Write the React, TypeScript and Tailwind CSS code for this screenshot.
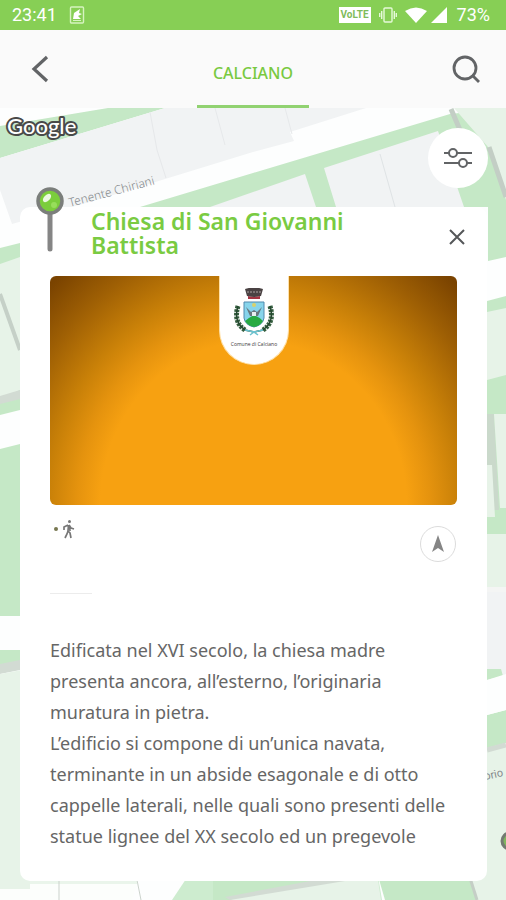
import React from "react";

function MapCanvas() {
  return (
    <svg
      className="absolute inset-0 h-full w-full"
      viewBox="0 108 506 792"
      preserveAspectRatio="xMidYMin slice"
      role="img"
      aria-label="Mappa"
    >
      <rect y="108" width="506" height="792" fill="#fdfefe" />
      {/* upper blocks */}
      <path d="M0 126 L108 108 H165 L0 158Z" fill="#c5e8c6" />
      <path d="M0 158 L165 108 H366 L290 132 L294 141 L253 152 L100 199 L12 224 L0 190Z" fill="#f1f3f4" />
      <path d="M150 112 L157 150 L166 178 M215 108 L225 145 M285 108 L292 134" stroke="#e6e8ea" fill="none" />
      <path d="M140 207 L253 173 L450 114 L506 108 V257 L488 261 V207Z" fill="#c5e8c6" />
      <path d="M210 207 L305 174 L316 207Z M324 168 L438 131 L464 207 H336Z" fill="#f1f3f4" />
      <path d="M380 154 L395 207" stroke="#dfe3e5" />
      <path d="M454 108 H506 V200 L488 147Z" fill="#e7f3e8" />
      <path d="M451 109 L466 144 M489 147 L506 197" stroke="#c3cec5" strokeWidth="5" />
      {/* left side */}
      <path d="M0 248 L20 243 V410 L0 415Z" fill="#c5e8c6" />
      <path d="M0 264 L20 257 V390 L0 400Z" fill="#e7f3e8" />
      <path d="M0 294 L20 350" stroke="#c5d0c7" strokeWidth="4" />
      <path d="M0 396 L20 390 V399 L0 404Z" fill="#d2dbd3" />
      <path d="M0 449 L20 444 V616 H0Z M0 650 H20 V664 H0Z" fill="#c5e8c6" />
      <path d="M0 664 L20 660 V670 L0 674Z" fill="#d2dbd3" />
      <path d="M0 674 L22 670 V890 H0Z" fill="#e7f3e8" />
      {/* right side */}
      <path d="M487 301 L506 296 V535 H487Z" fill="#c5e8c6" />
      <path d="M487 312 L506 308 V375 L487 380Z" fill="#e7f3e8" />
      <path d="M487 414 H494 L499 510 H487Z" fill="#cad9cb" />
      <path d="M494 414 H506 V508 H500Z M487 465 H492 L495 517 H487Z" fill="#e7f3e8" />
      <path d="M487 534 H506 V587 H487Z" fill="#e7f3e8" />
      <path d="M487 587 H506 V592 H487Z" fill="#f4f5f4" />
      <path d="M487 592 H506 V680 H487Z" fill="#f1f3f4" />
      <path d="M487 669 H501 L503 676 L487 680Z" fill="#c5e8c6" />
      <path d="M487 715 L506 710 V743 L487 748Z" fill="#c5e8c6" />
      {/* street running past the lower right corner */}
      <path d="M487 680 L506 674 V710 L487 715Z" fill="#fdfefe" />
      <path d="M487 750 L506 745 V900 H472 V876Z" fill="#e7f3e8" />
      <path d="M487 750 L506 745" stroke="#d2dbd3" strokeWidth="5" />
      {/* lower blocks */}
      <path d="M0 876 H139 L132 900 H0Z" fill="#fcfefc" />
      <path d="M0 876 H30 V889 H0Z" fill="#e7f3e8" />
      <path d="M30 876 H137 V884 H30Z" fill="#eaf5eb" />
      <path d="M59 880 V900 M137 880 L141 900" stroke="#cbd2cc" />
      <path d="M188 876 H378 L382 900 H172Z" fill="#cdeccf" />
      <path d="M213 876 H345 L250 900 H213Z" fill="#c5e8c6" />
      <path d="M238 897 L345 880 H378 L381 900 H230Z" fill="#e7f3e8" />
      <path d="M230 900 L345 881 H310 L225 897Z" fill="#d2dbd3" />
      <path d="M378 876 H469 L476 900 H385Z" fill="#c5e8c6" />
      <path d="M470 878 L477 900" stroke="#c5cec6" strokeWidth="3" />
      <circle cx="510" cy="841" r="8" fill="#80b65e" stroke="#737a72" strokeWidth="3" />
      {/* labels */}
      <text x="70" y="207" transform="rotate(-15 70 207)" fontSize="12" fill="#85898c" fontFamily="Noto Sans, sans-serif" fontWeight="300">Tenente Chiriani</text>
      <text x="485" y="780" transform="rotate(-12 485 780)" fontSize="11" fill="#85898c" fontFamily="Roboto, sans-serif">orio</text>
      <text x="7" y="134" fontSize="22" fill="#fff" stroke="#494949" strokeWidth="4" strokeLinejoin="round" paintOrder="stroke" fontFamily="Lato, sans-serif" fontWeight="500">Google</text>
    </svg>
  );
}

function StatusBar() {
  return (
    <div className="flex h-[30px] shrink-0 items-center bg-[#87cf55] pr-4 pl-3 text-white">
      <span className="text-[18px] leading-5">23:41</span>
      <svg className="ml-3 h-[18px] w-4" viewBox="0 0 16 18" fill="none" aria-hidden="true">
        <rect x="1.5" y="1" width="13" height="16" rx="1" stroke="#d6f3c0" strokeWidth="1.4" />
        <path d="M4 13 L5 7 L11 3 L10 7 L13 8 L9 10 L12 13Z" fill="#fff" />
        <path d="M4 14.5h8" stroke="#d6f3c0" />
      </svg>
      <div className="ml-auto flex items-center">
        <span className="flex h-4 w-8 items-center justify-center bg-white text-[10px] leading-4 font-bold text-[#7fbb5a]">VoLTE</span>
        <svg className="ml-2 h-[18px] w-[18px]" viewBox="0 0 18 18" fill="none" stroke="#e6f9d9" strokeWidth="1.4" aria-hidden="true">
          <rect x="5" y="2" width="8" height="14" rx="1" />
          <path d="M2.700 5v8M.7 7v4M15.300 5v8M17.300 7v4" />
        </svg>
        <svg className="ml-2 h-4 w-[22px]" viewBox="0 0 22 16" fill="#fff" aria-hidden="true">
          <path d="M0 4 Q11 -3 22 4 L11 16Z" />
        </svg>
        <svg className="ml-1 h-4 w-4" viewBox="0 0 16 16" fill="#fff" aria-hidden="true">
          <path d="M16 0V16H0Z" />
        </svg>
        <span className="ml-2.5 text-[18px] leading-5">73%</span>
      </div>
    </div>
  );
}

function Header() {
  return (
    <header className="flex h-[78px] shrink-0 items-stretch justify-between bg-[#fafafa]">
      <button aria-label="Indietro" className="flex w-20 items-center justify-center">
        <svg className="h-7 w-5" viewBox="0 0 20 28" fill="none" stroke="#626466" strokeWidth="3.200" aria-hidden="true">
          <path d="M17 2 L4 14 L17 26" />
        </svg>
      </button>
      <nav className="flex">
        <a href="#calciano" className="flex w-28 items-center justify-center border-b-3 border-[#91d271] pt-2.5 font-['Noto_Sans',sans-serif] text-[16px] leading-5 font-medium text-[#78c940]">
          CALCIANO
        </a>
      </nav>
      <button aria-label="Cerca" className="flex w-20 items-center justify-center">
        <svg className="h-7 w-7" viewBox="0 0 28 28" fill="none" stroke="#626466" strokeWidth="2.800" aria-hidden="true">
          <circle cx="13" cy="13" r="11" />
          <path d="M20 20 L27 27" />
        </svg>
      </button>
    </header>
  );
}

function Crest() {
  return (
    <svg className="h-[60px] w-12" viewBox="0 0 48 60" role="img" aria-label="Comune di Calciano">
      <path d="M15 1 Q24 -2 33 1 L31 8 Q24 10 17 8Z" fill="#4a4243" />
      <path d="M17 4 H31" stroke="#8c8484" strokeWidth="1.500" strokeDasharray="2 1" />
      <path d="M18 8 Q24 10 30 8 V11 H18Z" fill="#a33442" />
      <path d="M14 14 H34 V30 Q33 37 24 39 Q15 37 14 30Z" fill="#87d4eb" stroke="#5089ae" />
      <path d="M15 33 Q20 29 24 27 Q29 29 33 33 Q30 38 24 39 Q18 38 15 33Z" fill="#27aa43" />
      <circle cx="24" cy="17" r="2" fill="#d9d16b" />
      <path d="M16 19 L21 24 L24 22 L27 24 L32 19 L28 28 H20Z" fill="#68777f" />
      <path d="M22 24 H26 V28 H22Z" fill="#e7eef0" />
      <path d="M8 18 Q3 34 15 42" fill="none" stroke="#365f40" strokeWidth="5" strokeDasharray="2.500 1" />
      <path d="M40 18 Q45 34 33 42" fill="none" stroke="#365f40" strokeWidth="5" strokeDasharray="2.500 1" />
      <path d="M8 18 Q3 34 15 42 L24 44 M40 18 Q45 34 33 42 L24 44" fill="none" stroke="#24472f" strokeWidth="1.500" />
      <path d="M15 42 L24 44 L20 47 M33 42 L24 44 L28 47" fill="none" stroke="#6bc3d0" strokeWidth="1.500" />
      <text x="24" y="58" textAnchor="middle" fontSize="5" fill="#393939" fontFamily="Open Sans, sans-serif">Comune di Calciano</text>
    </svg>
  );
}

function Banner() {
  return (
    <div className="flex h-[229px] justify-center overflow-hidden rounded-md bg-[radial-gradient(ellipse_71%_135%_at_50%_100%,#f7a111_0%,#f7a111_53%,#e5930e_61%,#c88008_71%,#9e5f04_86%,#7a4300_100%)]">
      <div className="flex h-[89px] w-[70px] justify-center rounded-b-full border border-t-0 border-[#ffe1a9] bg-white pt-3">
        <Crest />
      </div>
    </div>
  );
}

function PlaceCard() {
  return (
    <article className="relative mt-[99px] mr-[19px] mb-[19px] ml-5 rounded-[10px] bg-white px-[30px] pb-[29px]">
      <svg className="absolute -top-5 left-4 h-[66px] w-7" viewBox="0 0 28 66" aria-hidden="true">
        <path d="M14 27V62" stroke="#858585" strokeWidth="5" strokeLinecap="round" />
        <circle cx="14" cy="14" r="12" fill="#7bcd3c" stroke="#7b7e7b" strokeWidth="3.500" />
        <ellipse cx="11" cy="11" rx="5" ry="3" transform="rotate(-45 11 11)" fill="#fff" opacity=".85" />
        <circle cx="18" cy="18" r="3" fill="#b4f079" opacity=".5" />
      </svg>
      <div className="flex h-[69px] items-start justify-between pt-0.5 pl-[41px]">
        <h1 className="max-w-[280px] font-['Noto_Sans',sans-serif] text-[23px] leading-6 font-semibold text-[#7acb42]">
          Chiesa di San Giovanni Battista
        </h1>
        <button aria-label="Chiudi" className="-mr-2 mt-[18px] flex h-5 w-4 items-center justify-center">
          <svg className="h-4 w-4" viewBox="0 0 16 16" fill="none" stroke="#555759" strokeWidth="2" aria-hidden="true">
            <path d="M1 1 L15 15 M15 1 L1 15" />
          </svg>
        </button>
      </div>
      <Banner />
      <div className="flex h-[88px] items-start justify-between pt-3.5">
        <div className="flex items-center gap-1 pl-1">
          <span className="h-1 w-1 rounded-full bg-[#777750]" />
          <svg className="h-5 w-4" viewBox="0 0 16 20" fill="none" stroke="#777" strokeWidth="1.700" aria-label="A piedi" role="img">
            <circle cx="7.500" cy="2.500" r="1.500" fill="#777" stroke="none" />
            <path d="M6.500 6 L6 12 L8 14 L9 19 M6 12 L5 15 L3 19 M6 6 L2 8 L2 11 M7 6 L9 9 L12 10 M7.500 6 L8 12" />
          </svg>
        </div>
        <button aria-label="Indicazioni" className="mt-[7px] mr-px flex h-9 w-9 items-center justify-center rounded-full border border-[#dcdcdc]">
          <svg className="h-[18px] w-3" viewBox="0 0 12 18" fill="#858585" aria-hidden="true">
            <path d="M6 0 L12 17 L6 13 L0 17Z" />
          </svg>
        </button>
      </div>
      <hr className="w-[42px] border-[#ececec]" />
      <div className="pt-[41px] font-['Noto_Sans',sans-serif] text-[18px] leading-[31px] text-[#666]">
        <p>Edificata nel XVI secolo, la chiesa madre <br />presenta ancora, all’esterno, l’originaria <br />muratura in pietra.</p>
        <p>L’edificio si compone di un’unica navata, <br />terminante in un abside esagonale e di otto <br />cappelle laterali, nelle quali sono presenti delle <br />statue lignee del XX secolo ed un pregevole</p>
      </div>
    </article>
  );
}

export default function App() {
  return (
    <div className="flex min-h-screen flex-col font-[Roboto,sans-serif]">
      <StatusBar />
      <Header />
      <main className="relative flex-1 overflow-hidden">
        <MapCanvas />
        <button aria-label="Filtri" className="absolute top-5 right-[18px] z-10 flex h-[60px] w-[60px] items-center justify-center rounded-full bg-white">
          <svg className="h-6 w-7" viewBox="0 0 28 24" fill="none" stroke="#626466" strokeWidth="2" aria-hidden="true">
            <path d="M0 7H5M13 7H28M0 17H15M23 17H28" />
            <circle cx="9" cy="7" r="4" />
            <circle cx="19" cy="17" r="4" />
          </svg>
        </button>
        <PlaceCard />
      </main>
    </div>
  );
}
